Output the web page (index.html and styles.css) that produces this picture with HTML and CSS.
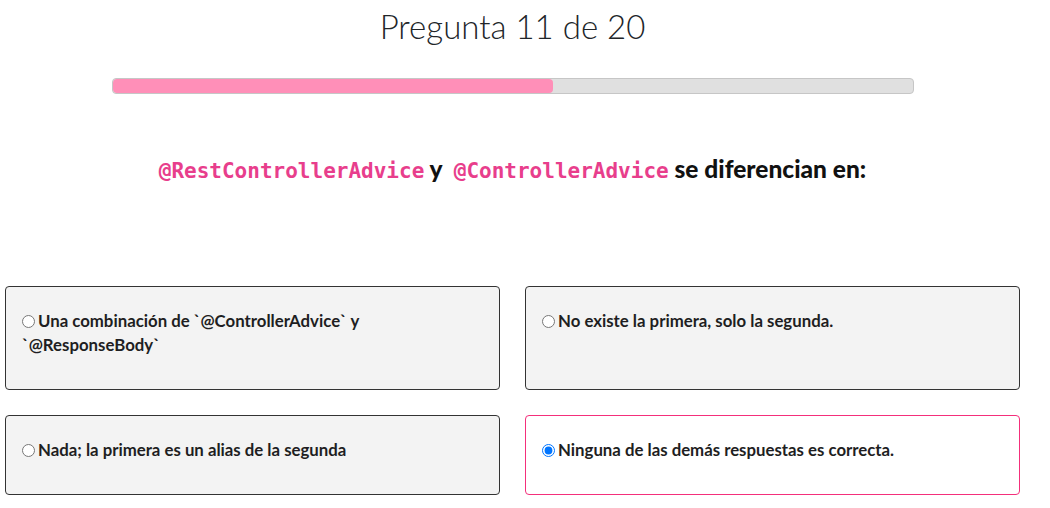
FILE: index.html
```html
<!DOCTYPE html>
<html lang="es">
<head>
<meta charset="utf-8">
<title>Pregunta 11 de 20</title>
<link rel="stylesheet" href="styles.css">
</head>
<body>
<div class="page">
  <h1 class="title">Pregunta 11 de 20</h1>
  <div class="progress"><div class="progress-bar" style="width: 55%"></div></div>
  <h2 class="question"><code>@RestControllerAdvice</code> y <code class="gap">@ControllerAdvice</code> se diferencian en:</h2>
  <div class="answers">
    <label class="answer"><input type="radio" name="a">Una combinación de `@ControllerAdvice` y `@ResponseBody`</label>
    <label class="answer"><input type="radio" name="a">No existe la primera, solo la segunda.</label>
    <label class="answer"><input type="radio" name="a">Nada; la primera es un alias de la segunda</label>
    <label class="answer selected"><input type="radio" name="a" checked>Ninguna de las demás respuestas es correcta.</label>
  </div>
</div>
</body>
</html>
```
FILE: styles.css
```css
html, body {
  margin: 0;
  padding: 0;
  background: #fff;
}
body {
  font-family: Lato, "Liberation Sans", sans-serif;
  color: #212529;
}
.page {
  padding: 0 30px 0 5px;
}
.title {
  margin: 0;
  padding-top: 6px;
  font-weight: 300;
  font-size: 33px;
  line-height: 40px;
  text-align: center;
  color: #212529;
}
.progress {
  margin: 32px 0 0 107px;
  width: 800px;
  height: 14px;
  border: 1px solid #c6c6c6;
  border-radius: 4px;
  background: #e0e0e0;
  overflow: hidden;
}
.progress-bar {
  height: 100%;
  background: #ff8fb8;
  border-radius: 4px;
}
.question {
  margin: 60px 0 0;
  font-size: 24.5px;
  font-weight: 900;
  line-height: 30px;
  text-align: center;
  color: #111;
}
.question code {
  font-family: "DejaVu Sans Mono", monospace;
  font-size: 21px;
  font-weight: 700;
  color: #e83e8c;
}
.question code.gap {
  margin-left: 6px;
}
.answers {
  display: grid;
  grid-template-columns: 1fr 1fr;
  gap: 25px;
  margin-top: 100px;
}
.answer {
  display: block;
  background: #f3f3f3;
  border: 1px solid #333;
  border-radius: 4px;
  padding: 22px 26px 32px 16px;
  font-size: 16.8px;
  font-weight: 700;
  line-height: 24px;
  color: #1e1e22;
}
.answer input {
  margin: 0 3px 0 0;
  width: 13px;
  height: 13px;
  vertical-align: -1px;
}
.answer.selected {
  background: #fff;
  border-color: #f42f7b;
}
```
